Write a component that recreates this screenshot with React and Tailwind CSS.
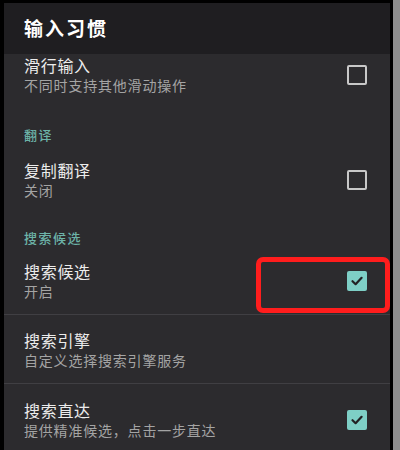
import React from 'react';

const font = { fontFamily: '"Noto Sans CJK SC", "Noto Sans", sans-serif' };

const Checkbox = ({ checked }) =>
  checked ? (
    <div className="w-[20px] h-[20px] rounded-[2px] bg-[#7ecfc6] flex items-center justify-center">
      <svg width="14" height="14" viewBox="0 0 14 14" fill="none">
        <path d="M2.5 7.2 L5.6 10.2 L11.6 3.8" stroke="#222224" strokeWidth="2.2" strokeLinecap="round" strokeLinejoin="round" />
      </svg>
    </div>
  ) : (
    <div className="w-[20px] h-[20px] rounded-[2px] border-2 border-[#c8c8c8]" />
  );

const Row = ({ title, subtitle, checkbox, className = '' }) => (
  <div className={`flex items-center pl-[20px] pr-[23px] ${className}`}>
    <div className="flex-1">
      <div className="text-[16px] leading-[21px] text-[#ececec] tracking-[0.7px]">{title}</div>
      <div className="text-[14px] leading-[19px] text-[#a4a4a4] tracking-[0.8px]">{subtitle}</div>
    </div>
    {checkbox !== undefined && <Checkbox checked={checkbox} />}
  </div>
);

const Section = ({ label, className = '' }) => (
  <div className={`pl-[20px] text-[13px] leading-[20px] font-medium text-[#6db3a8] tracking-[1.5px] ${className}`}>
    {label}
  </div>
);

export default function App() {
  return (
    <div className="w-[400px] h-[450px] bg-black flex overflow-hidden" style={font}>
      <div className="w-[4px]" />
      <div className="w-[386px] flex flex-col pt-[3px]">
        <div className="h-[51px] bg-[#1f1e21] flex items-center pl-[20px] text-[19px] font-bold text-white tracking-[2px]">
          输入习惯
        </div>
        <div className="flex-1 bg-[#2c2b2e]">
          <Row title="滑行输入" subtitle="不同时支持其他滑动操作" checkbox={false} className="pt-[1px] pb-[15px]" />
          <Section label="翻译" className="pt-[15px] pb-[15px]" />
          <Row title="复制翻译" subtitle="关闭" checkbox={false} className="pb-[28px]" />
          <Section label="搜索候选" />
          <div className="relative pt-[13px] pb-[13px] border-b border-[#403f43]">
            <Row title="搜索候选" subtitle="开启" checkbox={true} />
            <div className="absolute left-[252px] top-[9px] w-[134px] h-[56px] border-[5px] border-[#ff1d1d] rounded-[7px]" />
          </div>
          <div className="pt-[15px] pb-[13px] border-b border-[#403f43]">
            <Row title="搜索引擎" subtitle="自定义选择搜索引擎服务" />
          </div>
          <Row title="搜索直达" subtitle="提供精准候选，点击一步直达" checkbox={true} className="pt-[16px]" />
        </div>
      </div>
      <div className="w-[3px] bg-black" />
      <div className="flex-1 bg-[#8e8e8e]" />
    </div>
  );
}
